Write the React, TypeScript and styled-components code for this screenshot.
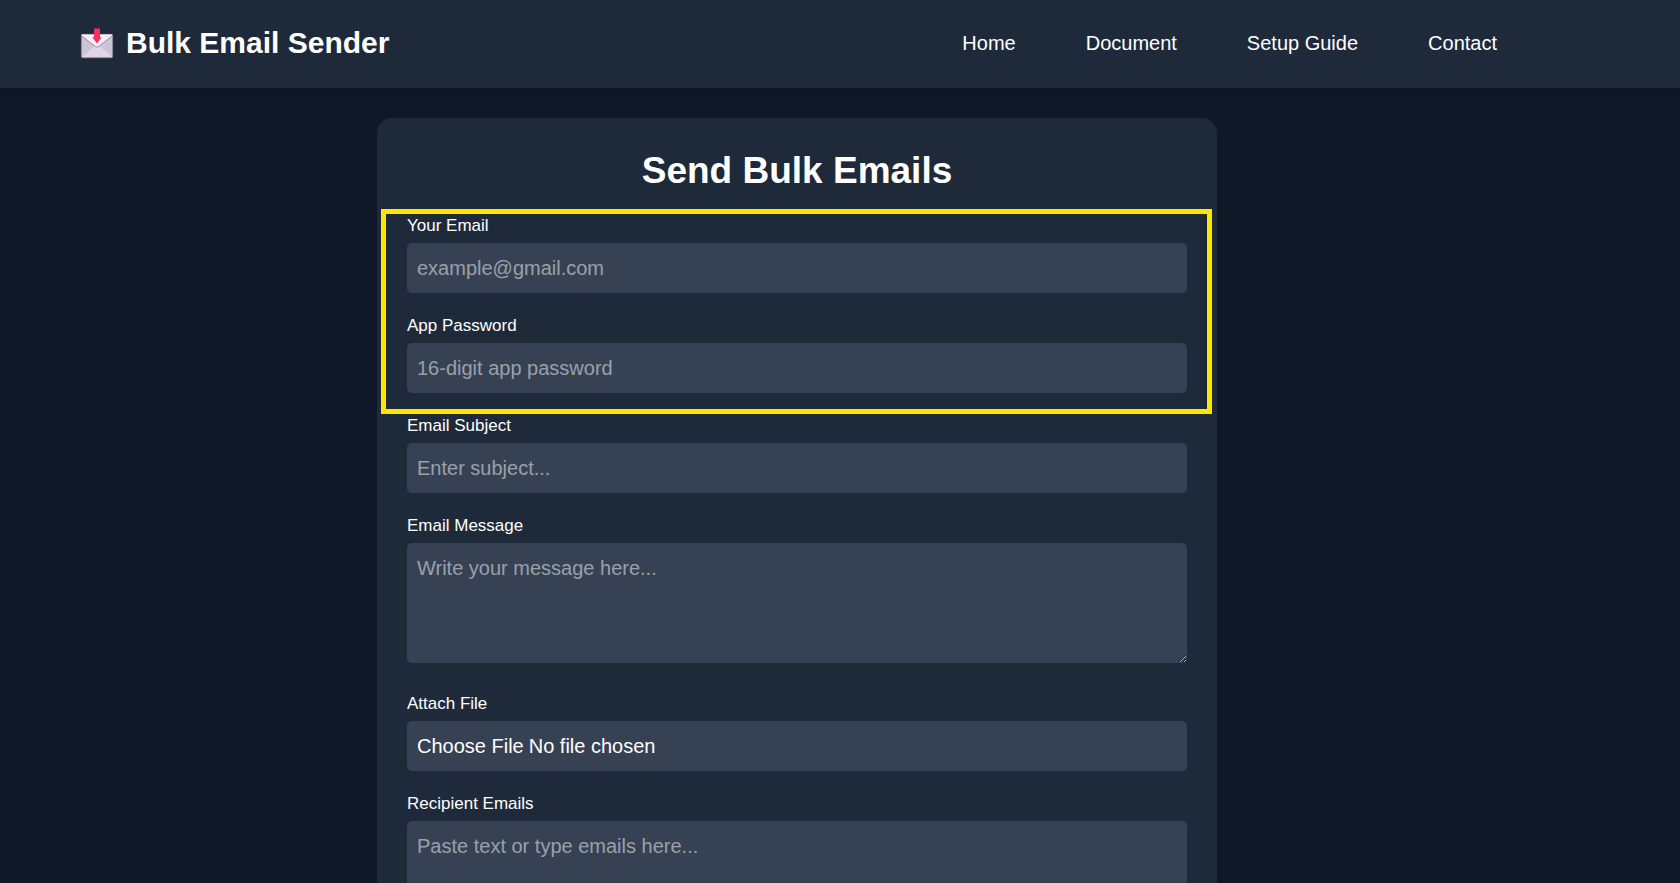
import React from "react";
import styled, { createGlobalStyle, css } from "styled-components";

const GlobalStyle = createGlobalStyle`
  *, *::before, *::after { box-sizing: border-box; }
  html { background: #101828; }
  body {
    margin: 0;
    background: #101828;
    color: #ffffff;
    font-family: "Liberation Sans", Arial, sans-serif;
    font-size: 20px;
    line-height: 30px;
  }
`;

const Header = styled.header`
  background: #1e2939;
  padding: 20px 183px 22px 80px;
  min-height: 88px;
  display: flex;
  align-items: center;
  justify-content: space-between;
  box-shadow: 0 5px 8px rgba(0, 0, 0, 0.1);
`;

const Brand = styled.a`
  display: flex;
  align-items: center;
  gap: 10px;
  color: inherit;
  text-decoration: none;
  font-size: 30px;
  line-height: 40px;
  font-weight: 700;
`;

const Nav = styled.nav`
  display: flex;
  gap: 70px;
`;

const NavLink = styled.a`
  color: inherit;
  text-decoration: none;
  &:hover { color: #60a5fa; }
`;

const Main = styled.main`
  display: flex;
  justify-content: center;
  padding: 30px 86px 30px 0;
`;

const Card = styled.form`
  width: 100%;
  max-width: 840px;
  padding: 30px;
  border-radius: 15px;
  background: #1e2939;
`;

const Title = styled.h1`
  margin: 0 0 20px;
  text-align: center;
  font-size: 37px;
  line-height: 45px;
  font-weight: 700;
`;

const Fields = styled.div`
  display: flex;
  flex-direction: column;
  gap: 20px;
`;

const Highlighted = styled(Fields)`
  position: relative;
`;

const HighlightFrame = styled.div`
  position: absolute;
  inset: -4px -25px -21px -26px;
  border: 5px solid #ffe600;
  pointer-events: none;
`;

const Field = styled.div<{ $multiline?: boolean }>`
  padding-bottom: ${(p) => (p.$multiline ? "8px" : "0")};
`;

const Label = styled.label`
  display: block;
  margin-bottom: 5px;
  font-size: 17px;
  line-height: 25px;
`;

const control = css`
  display: block;
  width: 100%;
  margin: 0;
  padding: 10px;
  border: 0;
  border-radius: 5px;
  background: #364153;
  color: #ffffff;
  font: inherit;
  &::placeholder { color: rgba(255, 255, 255, 0.5); opacity: 1; }
`;

const TextInput = styled.input`
  ${control}
  height: 50px;
  &::file-selector-button {
    margin: 0 5px 0 0;
    padding: 0;
    border: 0;
    background: transparent;
    color: inherit;
    font: inherit;
  }
`;

const TextArea = styled.textarea`
  ${control}
  height: 120px;
  resize: vertical;
`;

const EnvelopeIcon = () => (
  <svg width="36" height="36" viewBox="0 -1 36 36" aria-hidden="true">
    <rect x="1.3" y="8.3" width="31.4" height="23.4" rx="1.4" fill="#cdc4d6" stroke="#84788c" strokeWidth=".6" />
    <path d="M2 31.2 14.5 20h5L32 31.2Z" fill="#e0d6e8" />
    <path d="M1.8 8.6h30.4v1.2L18.6 20.3q-1.6 1.2-3.2 0L1.8 9.8Z" fill="#f4effa" />
    <path d="M1.8 10 15.4 20.5q1.6 1.2 3.2 0L32.2 10" fill="none" stroke="#998ca2" strokeWidth="1" />
    <path d="M14 2.6h6v8.6h1.7L17 17.6l-4.7-6.4H14Z" fill="#f92f60" />
    <path d="M1.8 31.6h30.4" stroke="#998ca2" strokeWidth=".8" />
  </svg>
);

const links = ["Home", "Document", "Setup Guide", "Contact"];

export default function App() {
  return (
    <>
      <GlobalStyle />
      <Header>
        <Brand href="#">
          <EnvelopeIcon />
          Bulk Email Sender
        </Brand>
        <Nav>
          {links.map((name) => (
            <NavLink key={name} href="#">{name}</NavLink>
          ))}
        </Nav>
      </Header>
      <Main>
        <Card>
          <Title>Send Bulk Emails</Title>
          <Fields>
            <Highlighted>
              <Field>
                <Label htmlFor="email">Your Email</Label>
                <TextInput id="email" type="email" placeholder="example@gmail.com" />
              </Field>
              <Field>
                <Label htmlFor="password">App Password</Label>
                <TextInput id="password" type="password" placeholder="16-digit app password" />
              </Field>
              <HighlightFrame />
            </Highlighted>
            <Field>
              <Label htmlFor="subject">Email Subject</Label>
              <TextInput id="subject" type="text" placeholder="Enter subject..." />
            </Field>
            <Field $multiline>
              <Label htmlFor="message">Email Message</Label>
              <TextArea id="message" placeholder="Write your message here..." />
            </Field>
            <Field>
              <Label htmlFor="file">Attach File</Label>
              <TextInput id="file" type="file" />
            </Field>
            <Field $multiline>
              <Label htmlFor="recipients">Recipient Emails</Label>
              <TextArea id="recipients" placeholder="Paste text or type emails here..." />
            </Field>
          </Fields>
        </Card>
      </Main>
    </>
  );
}
